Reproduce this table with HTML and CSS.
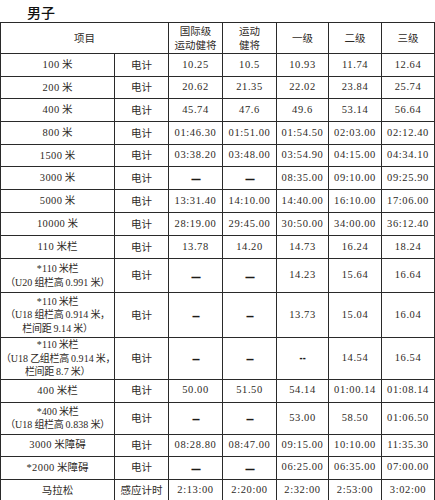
FILE: index.html
```html
<!DOCTYPE html>
<html lang="zh">
<head>
<meta charset="utf-8">
<link rel="stylesheet" href="styles.css">
</head>
<body>
<div class="title">男子</div>
<table class="grid">
<colgroup>
<col class="c1"><col class="c2"><col class="c3"><col class="c4"><col class="c5"><col class="c6"><col class="c7">
</colgroup>
<tr class="h31 head"><td colspan="2">项目</td><td>国际级<br>运动健将</td><td>运动<br>健将</td><td>一级</td><td>二级</td><td>三级</td></tr>
<tr class="h23"><td><span class="num">100</span> 米</td><td>电计</td><td class="n">10.25</td><td class="n">10.5</td><td class="n">10.93</td><td class="n">11.74</td><td class="n">12.64</td></tr>
<tr class="h22"><td><span class="num">200</span> 米</td><td>电计</td><td class="n">20.62</td><td class="n">21.35</td><td class="n">22.02</td><td class="n">23.84</td><td class="n">25.74</td></tr>
<tr class="h23"><td><span class="num">400</span> 米</td><td>电计</td><td class="n">45.74</td><td class="n">47.6</td><td class="n">49.6</td><td class="n">53.14</td><td class="n">56.64</td></tr>
<tr class="h23"><td><span class="num">800</span> 米</td><td>电计</td><td class="n">01:46.30</td><td class="n">01:51.00</td><td class="n">01:54.50</td><td class="n">02:03.00</td><td class="n">02:12.40</td></tr>
<tr class="h22"><td><span class="num">1500</span> 米</td><td>电计</td><td class="n">03:38.20</td><td class="n">03:48.00</td><td class="n">03:54.90</td><td class="n">04:15.00</td><td class="n">04:34.10</td></tr>
<tr class="h23"><td><span class="num">3000</span> 米</td><td>电计</td><td class="d"><span class="bar">—</span></td><td class="d"><span class="bar">—</span></td><td class="n">08:35.00</td><td class="n">09:10.00</td><td class="n">09:25.90</td></tr>
<tr class="h23"><td><span class="num">5000</span> 米</td><td>电计</td><td class="n">13:31.40</td><td class="n">14:10.00</td><td class="n">14:40.00</td><td class="n">16:10.00</td><td class="n">17:06.00</td></tr>
<tr class="h23"><td><span class="num">10000</span> 米</td><td>电计</td><td class="n">28:19.00</td><td class="n">29:45.00</td><td class="n">30:50.00</td><td class="n">34:00.00</td><td class="n">36:12.40</td></tr>
<tr class="h23"><td><span class="num">110</span> 米栏</td><td>电计</td><td class="n">13.78</td><td class="n">14.20</td><td class="n">14.73</td><td class="n">16.24</td><td class="n">18.24</td></tr>
<tr class="h34"><td class="ml"><span class="num">*110</span> 米栏<br>（<span class="num">U20</span> 组栏高 <span class="num">0.991</span> 米）</td><td>电计</td><td class="d"><span class="bar">—</span></td><td class="d"><span class="bar">—</span></td><td class="n">14.23</td><td class="n">15.64</td><td class="n">16.64</td></tr>
<tr class="h45"><td class="ml"><span class="num">*110</span> 米栏<br>（<span class="num">U18</span> 组栏高 <span class="num">0.914</span> 米，<br>栏间距 <span class="num">9.14</span> 米）</td><td>电计</td><td class="d"><span class="bar s">—</span></td><td class="d"><span class="bar s">—</span></td><td class="n">13.73</td><td class="n">15.04</td><td class="n">16.04</td></tr>
<tr class="h38"><td class="ml"><span class="num">*110</span> 米栏<br>（<span class="num">U18</span> 乙组栏高 <span class="num">0.914</span> 米，<br>栏间距 <span class="num">8.7</span> 米）</td><td>电计</td><td class="d"><span class="bar s">—</span></td><td class="d"><span class="bar s">—</span></td><td class="d"><span class="bar h">--</span></td><td class="n">14.54</td><td class="n">16.54</td></tr>
<tr class="h23"><td><span class="num">400</span> 米栏</td><td>电计</td><td class="n">50.00</td><td class="n">51.50</td><td class="n">54.14</td><td class="n">01:00.14</td><td class="n">01:08.14</td></tr>
<tr class="h32"><td class="ml"><span class="num">*400</span> 米栏<br>（<span class="num">U18</span> 组栏高 <span class="num">0.838</span> 米）</td><td>电计</td><td class="d"><span class="bar s">—</span></td><td class="d"><span class="bar s">—</span></td><td class="n">53.00</td><td class="n">58.50</td><td class="n">01:06.50</td></tr>
<tr class="h22"><td><span class="num">3000</span> 米障碍</td><td>电计</td><td class="n">08:28.80</td><td class="n">08:47.00</td><td class="n">09:15.00</td><td class="n">10:10.00</td><td class="n">11:35.30</td></tr>
<tr class="h23"><td><span class="num">*2000</span> 米障碍</td><td>电计</td><td class="d"><span class="bar">—</span></td><td class="d"><span class="bar">—</span></td><td class="n">06:25.00</td><td class="n">06:35.00</td><td class="n">07:00.00</td></tr>
<tr class="h22"><td>马拉松</td><td>感应计时</td><td class="n">2:13:00</td><td class="n">2:20:00</td><td class="n">2:32:00</td><td class="n">2:53:00</td><td class="n">3:02:00</td></tr>
</table>
</body>
</html>
```
FILE: styles.css
```css
html, body {
  margin: 0;
  padding: 0;
  background: #fff;
}
body {
  font-family: "Noto Sans CJK SC", "Noto Sans", sans-serif;
  color: #2e2a26;
}
.title {
  height: 22px;
  box-sizing: border-box;
  padding: 3px 0 0 27px;
  font-size: 14px;
  line-height: 18px;
  font-weight: 500;
  color: #111;
}
.grid {
  border-collapse: collapse;
  table-layout: fixed;
  width: 434px;
  font-size: 10.5px;
}
.c1 { width: 114px; }
.c2 { width: 54px; }
.c3 { width: 54px; }
.c4 { width: 54px; }
.c5 { width: 52px; }
.c6 { width: 53px; }
.c7 { width: 53px; }
.grid td {
  border: 1px solid #2a2a2a;
  padding: 0;
  text-align: center;
  vertical-align: middle;
  line-height: 12.5px;
  white-space: nowrap;
}
.head td {
  line-height: 14px;
}
.num {
  font-family: "Liberation Serif", "DejaVu Serif", serif;
  letter-spacing: 0.4px;
}
.grid td.n {
  font-family: "Liberation Serif", "DejaVu Serif", serif;
  letter-spacing: 0.6px;
  font-size: 10.5px;
}
.grid td.d {
  font-family: "Liberation Serif", serif;
  font-size: 10px;
  line-height: 14px;
}
.bar {
  display: inline-block;
  transform: scale(0.9, 2.2);
  font-weight: bold;
  color: #1e1b18;
}
.bar.s {
  transform: scale(0.7, 2.2);
}
.bar.h {
  transform: scale(0.9, 1.6);
  letter-spacing: 0.5px;
}
.grid td.ml {
  font-size: 10px;
  letter-spacing: -0.3px;
}
.grid td.ml .num {
  letter-spacing: 0.1px;
}
.h22 { height: 22px; }
.h23 { height: 23px; }
.h31 { height: 31px; }
.h32 { height: 32px; }
.h34 { height: 34px; }
.h38 { height: 38px; }
.h45 { height: 45px; }
```
